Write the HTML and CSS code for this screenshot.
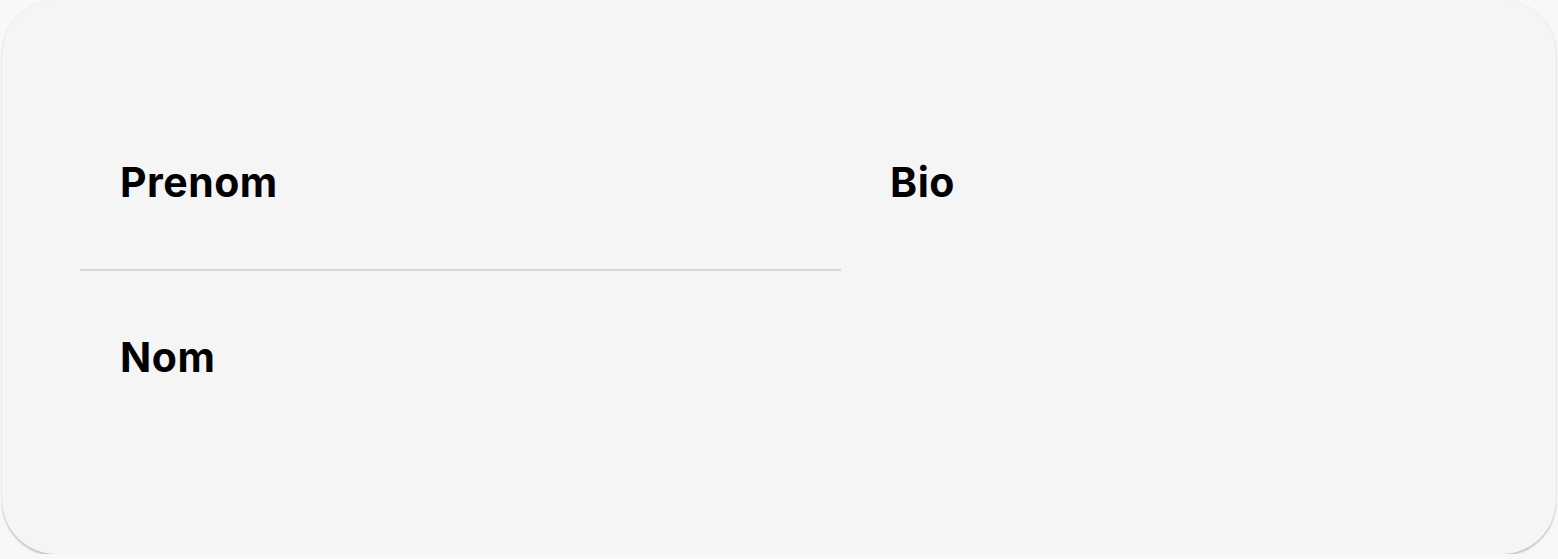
FILE: index.html
```html
<!DOCTYPE html>
<html lang="fr">
<head>
<meta charset="utf-8">
<title>Profil</title>
<link rel="stylesheet" href="styles.css">
</head>
<body>
<div class="card">
  <div class="grid">
    <div class="col-left">
      <div class="field field-first">
        <label class="label">Prenom</label>
      </div>
      <div class="field field-second">
        <label class="label">Nom</label>
      </div>
    </div>
    <div class="col-right">
      <div class="field field-first">
        <label class="label">Bio</label>
      </div>
    </div>
  </div>
</div>
</body>
</html>
```
FILE: styles.css
```css
html, body {
  margin: 0;
  padding: 0;
  background: #f8f8f8;
}
body {
  padding: 0 2px;
  font-family: Inter, "Liberation Sans", sans-serif;
}
.card {
  box-sizing: border-box;
  height: 554px;
  background: #f5f5f5;
  border-radius: 54px;
  box-shadow: 0 2px 2px rgba(0,0,0,0.2), 0 0 1px rgba(0,0,0,0.12);
  padding: 100px 80px 0 78px;
}
.grid {
  display: grid;
  grid-template-columns: 761px 1fr;
  gap: 9px;
}
.field {
  padding: 62px 40px 61px;
}
.field-first {
  padding-top: 58px;
  padding-bottom: 63px;
}
.col-left .field-first {
  border-bottom: 2px solid #d6d6d6;
}
.label {
  display: block;
  font-size: 41px;
  line-height: 48px;
  font-weight: 700;
  letter-spacing: 0.5px;
  color: #000;
}
```
